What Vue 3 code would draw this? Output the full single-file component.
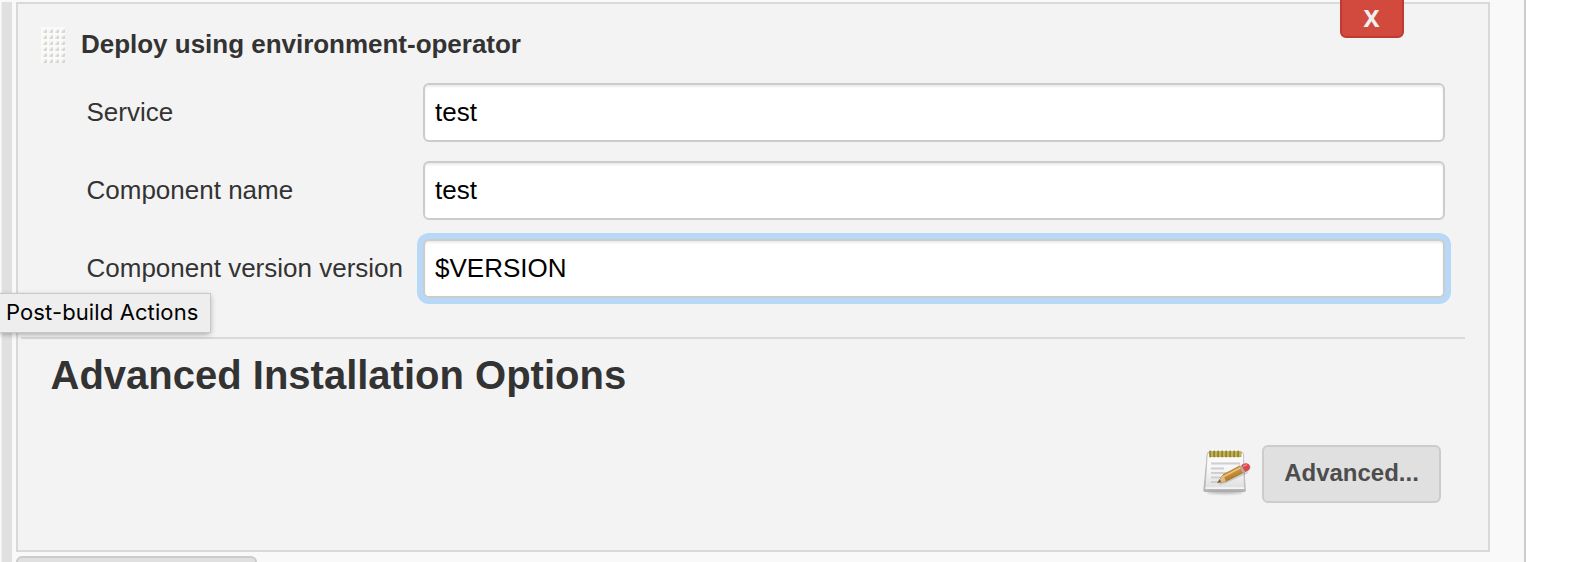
<script setup>
const fields = [
  { id: 'service', label: 'Service', value: 'test' },
  { id: 'component', label: 'Component name', value: 'test' },
  { id: 'version', label: 'Component version version', value: '$VERSION', focused: true },
]
const coils = Array.from({ length: 8 }, (_, i) => 7.2 + i * 4)
</script>

<template>
  <div class="page">
    <div class="content">
      <div class="rail"></div>
      <main class="main">
        <section class="card">
          <button class="delete">X</button>
          <header class="head">
            <span class="grip">
              <svg width="24" height="36">
                <defs>
                  <linearGradient id="dot" x1="0" y1="0" x2="1" y2="1">
                    <stop offset="0.3" stop-color="#f8f8f6" />
                    <stop offset="1" stop-color="#b4b4b4" />
                  </linearGradient>
                  <pattern id="dots" width="6" height="6" patternUnits="userSpaceOnUse">
                    <rect width="6" height="6" fill="#fafaf8" />
                    <rect x="1.8" y="1.8" width="4" height="4" rx="0.8" fill="url(#dot)" />
                  </pattern>
                </defs>
                <rect width="24" height="36" fill="url(#dots)" />
              </svg>
            </span>
            <b class="title">Deploy using environment-operator</b>
          </header>
          <div class="fields">
            <div v-for="f in fields" :key="f.id" class="row">
              <label class="label" :for="f.id">{{ f.label }}</label>
              <div :id="f.id" class="input" :class="{ focused: f.focused }">{{ f.value }}</div>
            </div>
          </div>
          <div class="divider"></div>
          <h2 class="heading">Advanced Installation Options</h2>
          <div class="actions">
            <svg class="note" width="48" height="48" viewBox="0 0 48 48">
              <defs>
                <linearGradient id="paper" x1="0" y1="0" x2="0" y2="1">
                  <stop offset="0" stop-color="#fdfdfd" />
                  <stop offset="0.5" stop-color="#f5f5f5" />
                  <stop offset="1" stop-color="#dedede" />
                </linearGradient>
                <linearGradient id="wood" x1="0" y1="0" x2="0.6" y2="1">
                  <stop offset="0" stop-color="#e8bd6c" />
                  <stop offset="0.5" stop-color="#d39a42" />
                  <stop offset="1" stop-color="#946019" />
                </linearGradient>
                <filter id="soft" x="-20%" y="-100%" width="140%" height="300%">
                  <feGaussianBlur stdDeviation="1" />
                </filter>
              </defs>
              <ellipse cx="22" cy="44.2" rx="18" ry="2" fill="#999" opacity="0.6" filter="url(#soft)" />
              <path d="M4 5.5Q4 4 6 4H38Q40 4 40.5 6L42.8 42.5Q43 44 41 44H2Q0 44 0.3 42Z" fill="#a0a0a0" opacity="0.75" />
              <path d="M4.7 5H39.5Q40.5 5 40.5 7L41.5 41H2L4.2 7Z" fill="url(#paper)" stroke="#bcbcbc" stroke-width="0.8" />
              <path d="M2.5 40.2H41.2" stroke="#fff" stroke-width="1.3" />
              <g stroke="#cecece" stroke-width="1.8">
                <path d="M8 15.5H37M8 20.5H21M8 25H29M8 29.5H23M8 34H18" />
              </g>
              <path d="M6.5 3.2H38.5V9H6.5Z" fill="#b9a850" />
              <g v-for="x in coils" :key="x">
                <path :d="`M${x} 3.5v5`" stroke="#94842d" stroke-width="1.8" stroke-linecap="round" />
                <path :d="`M${x + 1.8} 4v4`" stroke="#c8b95d" stroke-width="1.3" />
              </g>
              <path d="M16 37L22 35.5L44.5 25.5L46 20L42 17.5L19 29Z" fill="#555" opacity="0.22" />
              <path d="M14.5 34.8L20 26.8L37 17.8L40.8 24.3L23 33.2Z" fill="url(#wood)" stroke="#a47330" stroke-width="0.8" />
              <path d="M14.5 34.8L20 26.8L21.3 29.6L23 33.2Z" fill="#dfbd88" />
              <path d="M14.5 34.8L16.7 31.5L18.2 33.8Z" fill="#6d5433" />
              <path d="M20.5 28.8L37.5 19.8" stroke="#f1cd86" stroke-width="1.3" />
              <path d="M36.2 18.4L39.2 16.9L42.9 23.2L39.9 24.9Z" fill="#b7aaa0" />
              <path d="M38.8 17L42.6 15.4Q46 15.4 46.9 18.4Q47 21 45.6 21.9L42.3 23.6Z" fill="#df4648" stroke="#c8494a" stroke-width="0.6" />
              <path d="M40.6 18L43.7 16.9" stroke="#f58c88" stroke-width="1.4" stroke-linecap="round" />
            </svg>
            <button class="advanced">Advanced...</button>
          </div>
        </section>
        <div class="next"></div>
      </main>
    </div>
    <div class="tooltip">Post-build Actions</div>
  </div>
</template>

<style>
html, body { background: #fff; overflow: hidden; }
</style>

<style scoped>
.page {
  position: relative;
  height: 562px;
  overflow: hidden;
  font-family: "Liberation Sans", Arial, sans-serif;
  color: #333;
}
.content {
  box-sizing: border-box;
  display: flex;
  width: 1526px;
  height: 562px;
  padding: 2px 34px 0 1px;
  background: #f9f9f9;
  border-right: 2px solid #ccc;
}
.rail {
  box-sizing: border-box;
  flex: none;
  width: 11px;
  margin-right: 4px;
  background: #e0e0e0;
  border-left: 1px solid #f0f0f0;
}
.main { flex: 1; min-width: 0; }
.card {
  box-sizing: border-box;
  position: relative;
  height: 550px;
  background: #f3f3f3;
  border: 2px solid #d9d9d9;
}
.delete {
  position: absolute;
  top: -10px;
  right: 84px;
  box-sizing: border-box;
  width: 64px;
  height: 44px;
  padding: 3px 1px 0 0;
  border: 2px solid #bd3b30;
  border-radius: 6px;
  background: #d24a3e;
  color: #f0f0f0;
  font: bold 24px/28px "Noto Sans", sans-serif;
}
.head {
  display: flex;
  align-items: flex-start;
  height: 56px;
  padding: 23px 0 0 23px;
  box-sizing: border-box;
}
.grip { width: 24px; height: 36px; }
.title { margin: 2px 0 0 16px; font-size: 26px; line-height: 30px; letter-spacing: -0.02px; }
.fields {
  display: grid;
  gap: 19px;
  padding: 23px 43px 0 68px;
}
.row { display: grid; grid-template-columns: 337px 1fr; align-items: center; height: 59px; }
.label { font-size: 26px; line-height: 30px; padding: 0 0 1px 0.5px; }
.input {
  box-sizing: border-box;
  height: 59px;
  padding: 12px 10px;
  border: 2px solid #ccc;
  border-radius: 6px;
  background: #fff;
  box-shadow: inset 0 2px 2px rgba(0, 0, 0, 0.075);
  color: #000;
  font-size: 26px;
  line-height: 30px;
}
.focused { box-shadow: inset 0 2px 2px rgba(0, 0, 0, 0.075), 0 0 0 6px #b8d8f8; }
.divider { height: 2px; margin: 39px 23px 0 3px; background: #d9d9d9; }
.heading { margin: 14px 0 0 32.5px; font-size: 40px; line-height: 44px; }
.actions {
  display: flex;
  justify-content: flex-end;
  align-items: flex-start;
  gap: 11px;
  margin: 48px 47px 0 0;
}
.note { margin-top: 3px; }
.advanced {
  box-sizing: border-box;
  width: 179px;
  height: 58px;
  padding: 0 0 3px;
  border: 2px solid #ccc;
  border-radius: 6px;
  background: #e0e0e0;
  color: #4d4d4d;
  font: bold 24px/28px "Liberation Sans", Arial, sans-serif;
}
.next {
  box-sizing: border-box;
  width: 241px;
  height: 58px;
  margin-top: 4px;
  border: 2px solid #ccc;
  border-radius: 6px;
  background: #e0e0e0;
}
.tooltip {
  position: absolute;
  left: 0;
  top: 294px;
  box-sizing: border-box;
  width: 210px;
  height: 38px;
  padding-left: 6px;
  background: #eee;
  box-shadow: 0 0 0 1px #c8c8c8, 0 2px 6px rgba(0, 0, 0, 0.35);
  color: #000;
  font: 22px/36px Inter, sans-serif;
  letter-spacing: 0.11px;
  white-space: nowrap;
}
</style>
